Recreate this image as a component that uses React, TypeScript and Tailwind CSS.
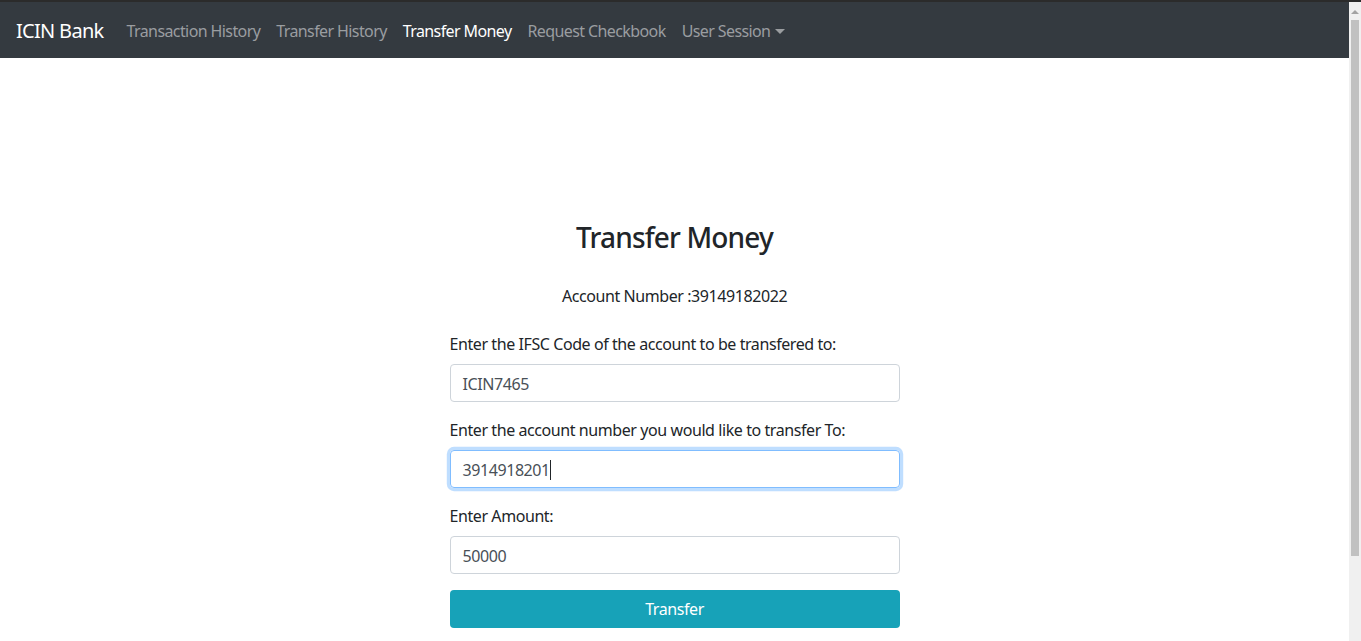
const navLinks = [
  { name: 'Transaction History', active: false },
  { name: 'Transfer History', active: false },
  { name: 'Transfer Money', active: true },
  { name: 'Request Checkbook', active: false }
]

function Field({ label, value, focused }: { label: string; value: string; focused?: boolean }) {
  return (
    <div className="mb-4">
      <label className="block mb-2 leading-6">{label}</label>
      <div
        className={
          focused
            ? 'flex items-center h-[38px] px-3 pt-[2px] rounded border border-[#80bdff] shadow-[0_0_0_3.2px_rgba(0,123,255,0.25)] text-[#495057]'
            : 'flex items-center h-[38px] px-3 pt-[2px] rounded border border-[#ced4da] text-[#495057]'
        }
      >
        {value}
        {focused && <span className="inline-block w-px h-[20px] bg-[#212529]" />}
      </div>
    </div>
  )
}

export default function App() {
  return (
    <div
      className="h-[641px] overflow-hidden flex flex-col bg-white text-[#212529] text-base tracking-[-0.42px]"
      style={{ fontFamily: '"Noto Sans", sans-serif' }}
    >
      <div className="h-[2px] bg-[#2b2b2b]" />
      <div className="flex flex-1 min-h-0">
        <div className="flex-1 min-w-0">
          <nav className="h-14 bg-[#343a40] flex items-center px-4 pt-[2px] tracking-[-0.6px]">
            <span className="text-xl text-white mr-[15px] leading-[30px] tracking-[-0.7px]">ICIN Bank</span>
            {navLinks.map(link => (
              <a
                key={link.name}
                className={link.active ? 'px-2 text-white' : 'px-2 text-[#9a9da0]'}
              >
                {link.name}
              </a>
            ))}
            <a className="px-2 text-[#9a9da0] flex items-center">
              User Session
              <span className="ml-[5px] w-0 h-0 border-t-[5px] border-t-[#9a9da0] border-x-[5px] border-x-transparent" />
            </a>
          </nav>

          <div className="w-[450px] mx-auto pt-[162px]">
            <h3 className="text-[28px] font-medium leading-[34px] text-center tracking-[-0.85px]">Transfer Money</h3>
            <p className="text-center leading-6 mt-[30px] mb-6">Account Number :39149182022</p>
            <Field label="Enter the IFSC Code of the account to be transfered to:" value="ICIN7465" />
            <Field label="Enter the account number you would like to transfer To:" value="3914918201" focused />
            <Field label="Enter Amount:" value="50000" />
            <button className="w-full h-[38px] rounded bg-[#17a2b8] text-white">Transfer</button>
          </div>
        </div>

        <div className="w-3 bg-[#f0f0f0] flex flex-col items-center">
          <div className="mt-[8px] w-0 h-0 border-b-[4px] border-b-[#a3a3a3] border-x-[4px] border-x-transparent" />
          <div className="mt-[6px] w-2 h-[536px] bg-[#c1c1c1]" />
        </div>
      </div>
    </div>
  )
}
